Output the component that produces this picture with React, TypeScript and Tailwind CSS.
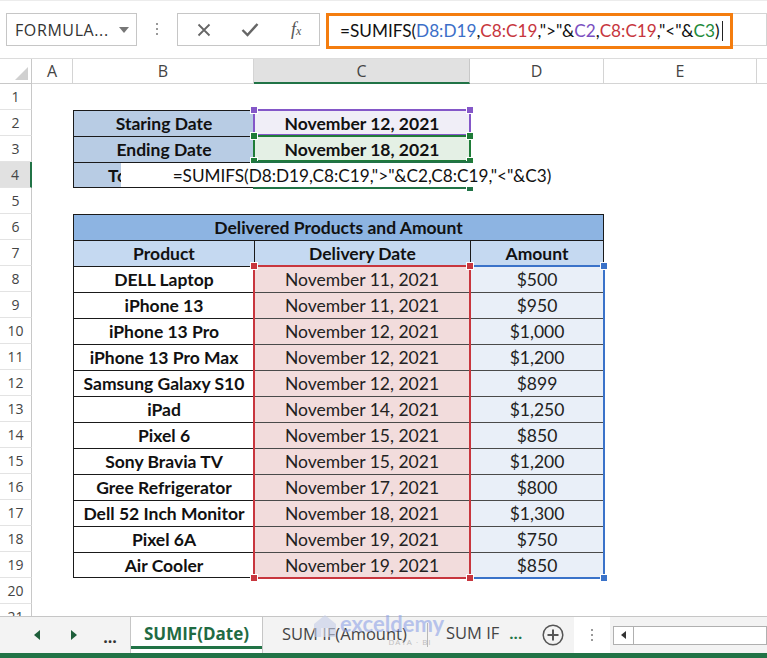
import React from 'react';

const SANS = "font-['Lato',sans-serif]";
const UI = "font-['Open_Sans',sans-serif]";

const products: [string, string, string][] = [
  ['DELL Laptop', 'November 11, 2021', '$500'],
  ['iPhone 13', 'November 11, 2021', '$950'],
  ['iPhone 13 Pro', 'November 12, 2021', '$1,000'],
  ['iPhone 13 Pro Max', 'November 12, 2021', '$1,200'],
  ['Samsung Galaxy S10', 'November 12, 2021', '$899'],
  ['iPad', 'November 14, 2021', '$1,250'],
  ['Pixel 6', 'November 15, 2021', '$850'],
  ['Sony Bravia TV', 'November 15, 2021', '$1,200'],
  ['Gree Refrigerator', 'November 17, 2021', '$800'],
  ['Dell 52 Inch Monitor', 'November 18, 2021', '$1,300'],
  ['Pixel 6A', 'November 19, 2021', '$750'],
  ['Air Cooler', 'November 19, 2021', '$850'],
];

function RH({ n, active }: { n: number; active?: boolean }) {
  return (
    <div
      className={`w-[32px] shrink-0 h-full flex items-center justify-center text-[14px] text-[#444] border-b border-b-[#e3e3e3] ${UI} ${
        active ? 'bg-[#e1e1e1] border-r-2 border-r-[#217346]' : 'bg-white border-r border-r-[#c8c8c8]'
      }`}
    >
      {n}
    </div>
  );
}

function Cell({ w, cls = '', children }: { w: string; cls?: string; children?: React.ReactNode }) {
  return (
    <div className={`${w} shrink-0 h-full flex items-center justify-center pt-[2px] text-[17.5px] text-[#111] whitespace-nowrap ${SANS} ${cls}`}>
      {children}
    </div>
  );
}

function Row({ n, active, children }: { n: number; active?: boolean; children?: React.ReactNode }) {
  return (
    <div className="flex h-[26px]">
      <RH n={n} active={active} />
      {children}
    </div>
  );
}

function EmptyRow({ n }: { n: number }) {
  return <Row n={n} />;
}

function Handle({ pos, color }: { pos: string; color: string }) {
  return <div className={`absolute w-[8px] h-[8px] border border-white ${color} ${pos}`} />;
}

function FormulaText() {
  return (
    <>
      <span>=SUMIFS(</span>
      <span className="text-[#3b6fc8]">D8:D19</span>
      <span>,</span>
      <span className="text-[#c7363d]">C8:C19</span>
      <span>,"&gt;"&amp;</span>
      <span className="text-[#7b4fc0]">C2</span>
      <span>,</span>
      <span className="text-[#c7363d]">C8:C19</span>
      <span>,"&lt;"&amp;</span>
      <span className="text-[#1e8a3a]">C3</span>
      <span>)</span>
    </>
  );
}

export default function App() {
  const A = 'w-[41px]';
  const B = 'w-[181px]';
  const C = 'w-[216px]';
  const D = 'w-[134px]';
  const E = 'w-[153px]';
  return (
    <div className="w-[767px] h-[658px] overflow-hidden bg-white flex flex-col select-none">
      {/* Formula bar */}
      <div className="h-[58px] shrink-0 flex items-start pt-[12px] bg-white border-t border-[#ececec]">
        <div className={`ml-[6px] w-[131px] h-[33px] border border-[#c6c6c6] flex items-center pl-[8px] pr-[7px] text-[16px] text-[#333] ${UI}`}>
          <span className="flex-1 tracking-[0.6px] whitespace-nowrap">FORMULA...</span>
          <svg width="10" height="6" viewBox="0 0 10 6">
            <path d="M0 0 L10 0 L5 6 Z" fill="#777" />
          </svg>
        </div>
        <div className="ml-[19px] mt-[10px] flex flex-col gap-[3px]">
          <div className="w-[2px] h-[2px] bg-[#999]" />
          <div className="w-[2px] h-[2px] bg-[#999]" />
          <div className="w-[2px] h-[2px] bg-[#999]" />
        </div>
        <div className="ml-[19px] w-[143px] h-[33px] border border-[#c6c6c6] flex items-center">
          <div className="w-[50px] flex justify-center pl-[2px]">
            <svg width="14" height="14" viewBox="0 0 14 14">
              <path d="M1.5 1.5 L12.5 12.5 M12.5 1.5 L1.5 12.5" stroke="#666" strokeWidth="1.8" />
            </svg>
          </div>
          <div className="w-[46px] flex justify-center">
            <svg width="18" height="15" viewBox="0 0 18 15">
              <path d="M1.5 8 L6.5 13 L16.5 2" stroke="#666" strokeWidth="2.4" fill="none" />
            </svg>
          </div>
          <div className={`w-[46px] flex justify-center text-[18px] text-[#555] italic font-['Liberation_Serif',serif]`}>
            <span>f</span>
            <span className="text-[12px] mt-[6px]">x</span>
          </div>
        </div>
        <div className={`ml-[6px] w-[407px] h-[36px] border-[3px] border-[#f47d0f] flex items-center pl-[11px] text-[17.2px] text-[#111] whitespace-nowrap ${SANS}`}>
          <FormulaText />
          <span className="ml-[2px] w-[1px] h-[20px] bg-[#222]" />
        </div>
        <div className="flex-1 h-[33px] border-y border-r border-[#d4d4d4] bg-white" />
      </div>

      {/* Sheet */}
      <div className="h-[558px] shrink-0 flex flex-col overflow-hidden">
        {/* Column headers */}
        <div className={`flex h-[26px] shrink-0 text-[16px] text-[#444] ${UI} border-t border-[#dcdcdc]`}>
          <div className="w-[32px] shrink-0 relative border-r border-b border-[#c8c8c8] bg-white">
            <svg className="absolute right-[3px] bottom-[3px]" width="13" height="13" viewBox="0 0 13 13">
              <path d="M13 0 L13 13 L0 13 Z" fill="#d0d0d0" />
            </svg>
          </div>
          <div className={`${A} shrink-0 flex items-center justify-center border-r border-b border-[#d4d4d4]`}>A</div>
          <div className={`${B} shrink-0 flex items-center justify-center border-r border-b border-[#d4d4d4]`}>B</div>
          <div className={`${C} shrink-0 flex items-center justify-center bg-[#e1e1e1] border-r border-r-[#c8c8c8] border-b-2 border-b-[#217346]`}>C</div>
          <div className={`${D} shrink-0 flex items-center justify-center border-r border-b border-[#d4d4d4]`}>D</div>
          <div className={`${E} shrink-0 flex items-center justify-center border-r border-b border-[#d4d4d4]`}>E</div>
          <div className="flex-1 border-b border-[#d4d4d4]" />
        </div>

        {/* Body */}
        <div className="relative flex-1 overflow-hidden">
          <EmptyRow n={1} />
          <Row n={2}>
            <Cell w={A} />
            <Cell w={B} cls="font-bold bg-[#b8cce4] border-l border-t border-[#1a1a1a]">Staring Date</Cell>
            <Cell w={C} cls="font-bold bg-[#f0eef7]">November 12, 2021</Cell>
          </Row>
          <Row n={3}>
            <Cell w={A} />
            <Cell w={B} cls="font-bold bg-[#b8cce4] border-l border-t border-[#1a1a1a]">Ending Date</Cell>
            <Cell w={C} cls="font-bold bg-[#e4f0e5]">November 18, 2021</Cell>
          </Row>
          <Row n={4} active>
            <Cell w={A} />
            <Cell w={B} cls="font-bold bg-[#b8cce4] border-l border-t border-b border-[#1a1a1a] tracking-[0.6px]">Total Amount</Cell>
            <Cell w={C} />
          </Row>
          <EmptyRow n={5} />
          <Row n={6}>
            <Cell w={A} />
            <Cell w="w-[531px]" cls="font-bold bg-[#8db4e2] border-l border-t border-r border-[#1a1a1a]">
              Delivered Products and Amount
            </Cell>
          </Row>
          <Row n={7}>
            <Cell w={A} />
            <Cell w={B} cls="font-bold bg-[#c5d9f1] border-l border-t border-[#1a1a1a]">Product</Cell>
            <Cell w={C} cls="font-bold bg-[#c5d9f1] border-l border-t border-[#1a1a1a]">Delivery Date</Cell>
            <Cell w={D} cls="font-bold bg-[#c5d9f1] border-l border-t border-r border-[#1a1a1a]">Amount</Cell>
          </Row>
          {products.map(([p, d, a], i) => {
            const last = i === products.length - 1;
            return (
              <Row n={8 + i} key={p + i}>
                <Cell w={A} />
                <Cell w={B} cls={`font-bold bg-white border-l border-t border-[#1a1a1a] ${last ? 'border-b' : ''}`}>{p}</Cell>
                <Cell w={C} cls={`bg-[#f2dcdc] text-[#222] border-t border-[#4a4a4a] ${last ? 'border-b' : ''}`}>{d}</Cell>
                <Cell w={D} cls={`bg-[#e9eff8] text-[#222] border-t border-[#4a4a4a] ${last ? 'border-b' : ''}`}>{a}</Cell>
              </Row>
            );
          })}
          <EmptyRow n={20} />
          <EmptyRow n={21} />

          {/* Range highlights (overlays) */}
          <div className="absolute left-[253px] top-[25px] w-[218px] h-[27px] border-2 border-[#8457c8]">
            <Handle color="bg-[#8457c8]" pos="-left-[5px] -top-[5px]" />
            <Handle color="bg-[#8457c8]" pos="-right-[5px] -top-[5px]" />
          </div>
          <div className="absolute left-[253px] top-[51px] w-[218px] h-[27px] border-2 border-[#1f7c38]">
            <Handle color="bg-[#1f7c38]" pos="-left-[5px] -top-[5px]" />
            <Handle color="bg-[#1f7c38]" pos="-right-[5px] -top-[5px]" />
            <Handle color="bg-[#1f7c38]" pos="-left-[5px] -bottom-[5px]" />
            <Handle color="bg-[#1f7c38]" pos="-right-[5px] -bottom-[5px]" />
          </div>
          <div className="absolute left-[253px] top-[77px] w-[218px] h-[28px] border-2 border-[#217346]">
            <Handle color="bg-[#217346]" pos="-right-[5px] -bottom-[5px]" />
          </div>
          <div className="absolute left-[469px] top-[181px] w-[136px] h-[314px] border-2 border-[#3a72c9]">
            <Handle color="bg-[#3a72c9]" pos="-right-[5px] -top-[5px]" />
            <Handle color="bg-[#3a72c9]" pos="-right-[5px] -bottom-[5px]" />
          </div>
          <div className="absolute left-[253px] top-[181px] w-[218px] h-[314px] border-2 border-[#c8363e]">
            <Handle color="bg-[#c8363e]" pos="-left-[5px] -top-[5px]" />
            <Handle color="bg-[#c8363e]" pos="-right-[5px] -top-[5px]" />
            <Handle color="bg-[#c8363e]" pos="-left-[5px] -bottom-[5px]" />
            <Handle color="bg-[#c8363e]" pos="-right-[5px] -bottom-[5px]" />
          </div>

          {/* In-cell editing text */}
          <div className={`absolute left-[121px] top-[79px] w-[482px] h-[24px] bg-white flex items-center justify-center pt-[1px] text-[17.2px] text-[#111] whitespace-nowrap ${SANS}`}>
            =SUMIFS(D8:D19,C8:C19,"&gt;"&amp;C2,C8:C19,"&lt;"&amp;C3)
          </div>
        </div>
      </div>

      {/* Sheet tabs */}
      <div className={`relative h-[37px] shrink-0 flex items-stretch bg-[#f3f3f3] border-t border-[#c6c6c6] whitespace-nowrap ${UI}`}>
        <div className="w-[130px] shrink-0 flex items-center pl-[27px]">
          <div className="w-[20px] flex justify-center">
            <svg width="6" height="10" viewBox="0 0 6 10"><path d="M6 0 L6 10 L0 5 Z" fill="#1e5e3a" /></svg>
          </div>
          <div className="w-[20px] ml-[17px] flex justify-center">
            <svg width="6" height="10" viewBox="0 0 6 10"><path d="M0 0 L0 10 L6 5 Z" fill="#1e5e3a" /></svg>
          </div>
          <div className="w-[20px] ml-[16px] flex justify-center text-[16px] font-bold text-[#333] leading-none pt-[4px]">...</div>
        </div>
        <div className="w-[133px] shrink-0 relative bg-white border-x border-[#c6c6c6] flex items-center justify-center pb-[3px] text-[17px] font-bold text-[#1f6b43]">
          SUMIF(Date)
          <div className="absolute left-0 right-0 bottom-[4px] h-[3px] bg-[#217346]" />
        </div>
        <div className="w-[165px] shrink-0 flex items-center pl-[19px] pb-[1px] text-[16.5px] text-[#444] border-r border-[#b8b8b8] my-[6px]">
          SUM IF(Amount)
        </div>
        <div className="w-[96px] shrink-0 flex items-center pl-[18px] pb-[3px] text-[16.5px] text-[#444]">
          <span>SUM IF</span>
          <span className="ml-[10px] text-[15px] font-bold text-[#217346]">...</span>
        </div>
        <div className="w-[50px] shrink-0 flex items-center justify-center pl-[8px]">
          <svg width="22" height="22" viewBox="0 0 22 22">
            <circle cx="11" cy="11" r="9.8" stroke="#555" strokeWidth="1.5" fill="none" />
            <path d="M11 5.5 V16.5 M5.5 11 H16.5" stroke="#555" strokeWidth="2" />
          </svg>
        </div>
        <div className="w-[36px] shrink-0 flex items-center justify-center bg-white">
          <div className="flex flex-col gap-[3px]">
            <div className="w-[2px] h-[2px] bg-[#999]" />
            <div className="w-[2px] h-[2px] bg-[#999]" />
            <div className="w-[2px] h-[2px] bg-[#999]" />
          </div>
        </div>
        <div className="flex-1 flex items-center pl-[3px] bg-[#f3f3f3]">
          <div className="flex-1 h-[19px] border border-[#b0b0b0] bg-white flex">
            <div className="w-[20px] border-r border-[#b0b0b0] flex items-center justify-center">
              <svg width="5" height="8" viewBox="0 0 5 8"><path d="M5 0 L5 8 L0 4 Z" fill="#333" /></svg>
            </div>
          </div>
        </div>

        {/* watermark */}
        <div className="absolute left-[312px] top-[-6px] flex items-start opacity-60 pointer-events-none">
          <svg width="26" height="26" viewBox="0 0 26 26" className="mt-[2px]">
            <path d="M13 2 L24 11 L24 24 L2 24 L2 11 Z" fill="#c5cde8" />
            <path d="M9 24 L9 15 L17 15 L17 24 Z" fill="#e3e7f5" />
          </svg>
          <div className="flex flex-col items-center ml-[2px]">
            <span className="text-[22px] font-bold text-[#8fa3e6] leading-[26px] font-['Lato',sans-serif]">exceldemy</span>
            <span className="text-[8px] text-[#9a9a9a] tracking-[1px] leading-[10px] ml-[36px]">DATA · BI</span>
          </div>
        </div>
      </div>
      <div className="h-[5px] shrink-0 bg-[#217346]" />
    </div>
  );
}
